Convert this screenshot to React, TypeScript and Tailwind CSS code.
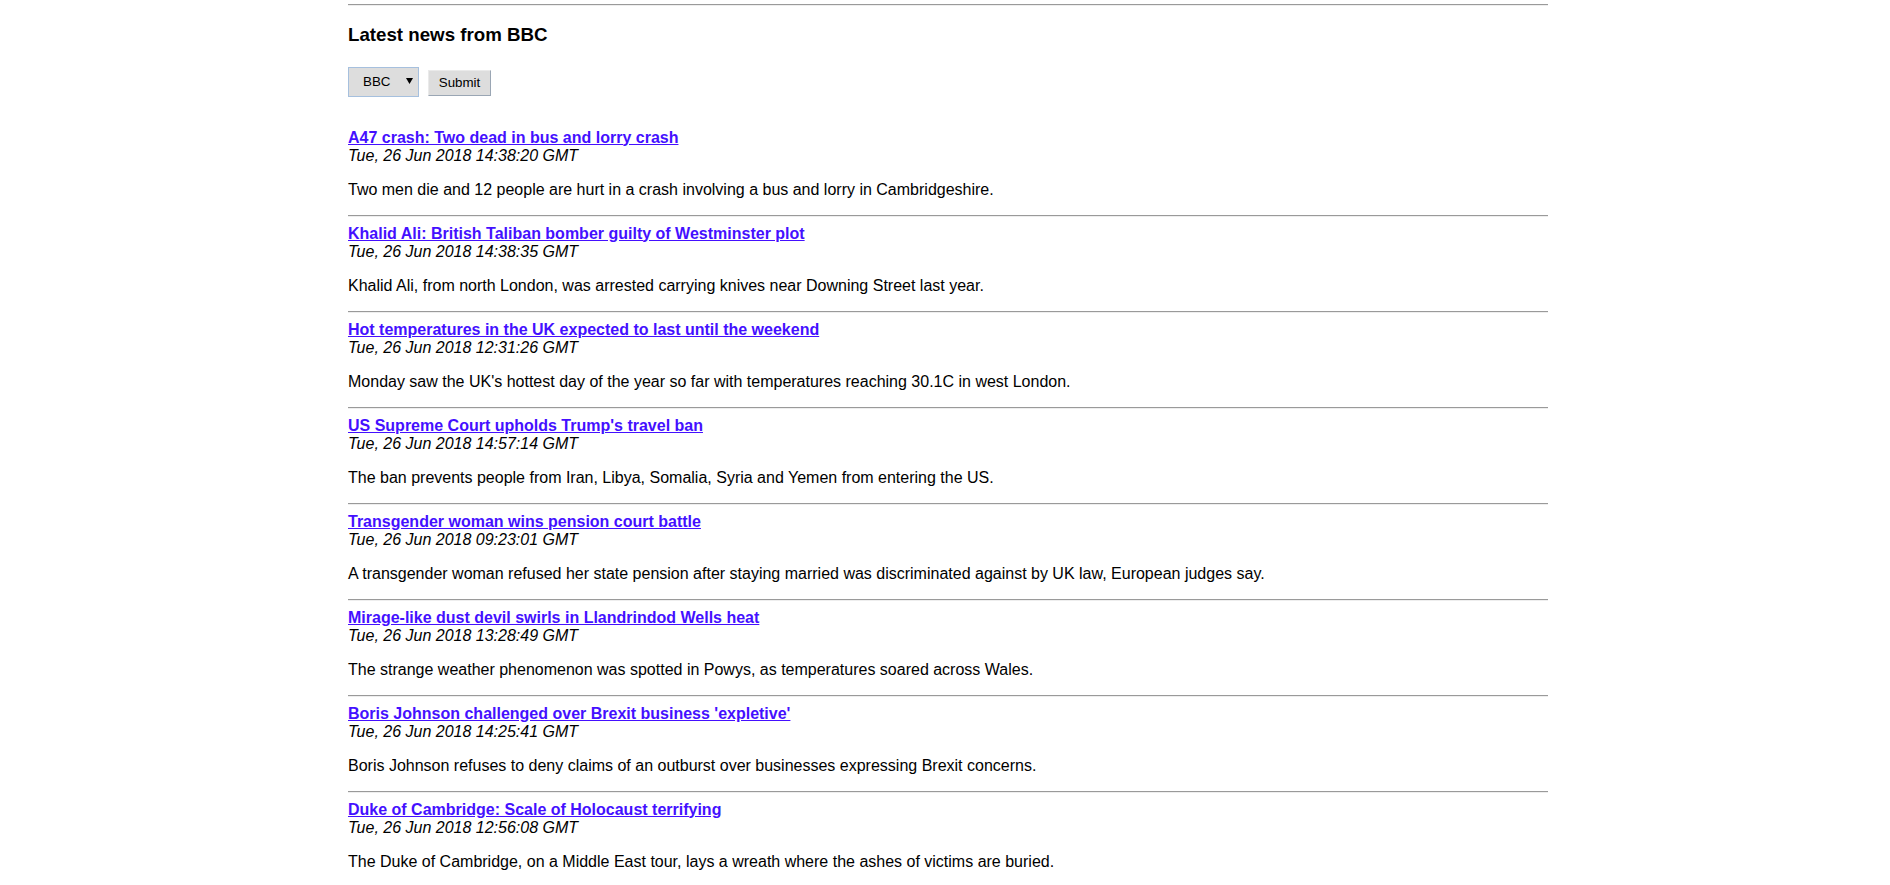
import React from "react";

const items = [
  {
    title: "A47 crash: Two dead in bus and lorry crash",
    date: "Tue, 26 Jun 2018 14:38:20 GMT",
    desc: "Two men die and 12 people are hurt in a crash involving a bus and lorry in Cambridgeshire.",
  },
  {
    title: "Khalid Ali: British Taliban bomber guilty of Westminster plot",
    date: "Tue, 26 Jun 2018 14:38:35 GMT",
    desc: "Khalid Ali, from north London, was arrested carrying knives near Downing Street last year.",
  },
  {
    title: "Hot temperatures in the UK expected to last until the weekend",
    date: "Tue, 26 Jun 2018 12:31:26 GMT",
    desc: "Monday saw the UK's hottest day of the year so far with temperatures reaching 30.1C in west London.",
  },
  {
    title: "US Supreme Court upholds Trump's travel ban",
    date: "Tue, 26 Jun 2018 14:57:14 GMT",
    desc: "The ban prevents people from Iran, Libya, Somalia, Syria and Yemen from entering the US.",
  },
  {
    title: "Transgender woman wins pension court battle",
    date: "Tue, 26 Jun 2018 09:23:01 GMT",
    desc: "A transgender woman refused her state pension after staying married was discriminated against by UK law, European judges say.",
  },
  {
    title: "Mirage-like dust devil swirls in Llandrindod Wells heat",
    date: "Tue, 26 Jun 2018 13:28:49 GMT",
    desc: "The strange weather phenomenon was spotted in Powys, as temperatures soared across Wales.",
  },
  {
    title: "Boris Johnson challenged over Brexit business 'expletive'",
    date: "Tue, 26 Jun 2018 14:25:41 GMT",
    desc: "Boris Johnson refuses to deny claims of an outburst over businesses expressing Brexit concerns.",
  },
  {
    title: "Duke of Cambridge: Scale of Holocaust terrifying",
    date: "Tue, 26 Jun 2018 12:56:08 GMT",
    desc: "The Duke of Cambridge, on a Middle East tour, lays a wreath where the ashes of victims are buried.",
  },
];

function Hr() {
  return <div className="h-[2px] border-t border-b border-t-[#9a9a9a] border-b-[#eeeeee]" />;
}

export default function App() {
  return (
    <div className="min-h-screen bg-white">
      <div className="ml-[348px] w-[1200px] font-['Liberation_Sans',Arial,sans-serif] text-[16px] leading-[18px] text-black">
        <div className="pt-[4px]">
          <Hr />
        </div>
        <h3 className="mt-[18px] text-[18.72px] font-bold leading-[21.5px]">Latest news from BBC</h3>
        <div className="mt-[21px] flex items-start">
          <div className="flex h-[30px] w-[71px] items-center border border-[#a6c0de] bg-[#dddddd] pl-[14px] pt-[1px] text-[13.33px] leading-none">
            <span>BBC</span>
            <svg className="ml-[16px] mb-[2px]" width="7" height="6" viewBox="0 0 7 6">
              <path d="M0 0H7L3.5 6Z" fill="#000" />
            </svg>
          </div>
          <div className="ml-[9px] mt-[3px] flex h-[26px] w-[63px] items-center justify-center border border-t-[#eaeaea] border-l-[#eaeaea] border-r-[#9aa6b4] border-b-[#9aa6b4] bg-[#dddddd] text-[13.33px] leading-none">
            Submit
          </div>
        </div>
        <div className="mt-[32px]">
          {items.map((it, i) => (
            <div key={i}>
              <a href="#" className="font-bold text-[#4410ff] underline">
                {it.title}
              </a>
              <br />
              <i>{it.date}</i>
              <p className="my-[16px]">{it.desc}</p>
              {i < items.length - 1 && (
                <div className="mb-[8px]">
                  <Hr />
                </div>
              )}
            </div>
          ))}
        </div>
      </div>
    </div>
  );
}
